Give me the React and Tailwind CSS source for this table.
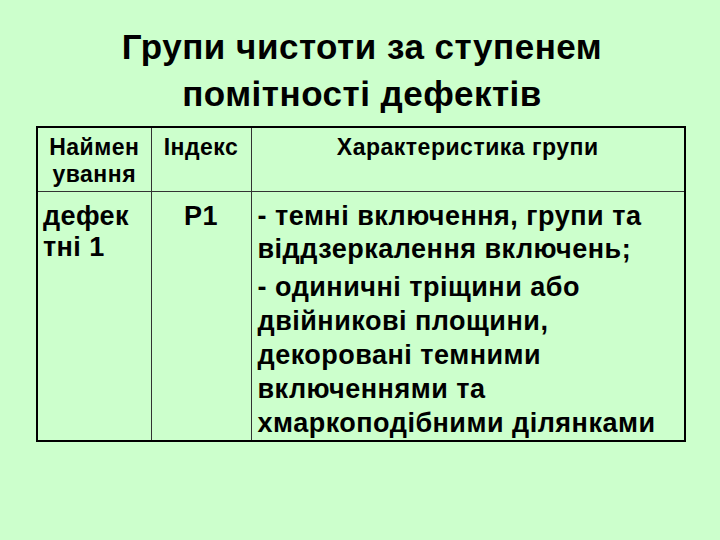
export default function App() {
  return (
    <div
      className="w-[720px] h-[540px] bg-[#ccffcc] text-black font-bold"
      style={{ fontFamily: '"Liberation Sans", Arial, sans-serif' }}
    >
      <h1 className="pt-[23px] text-center text-[35px] leading-[47px] tracking-[0.5px] pl-[4px]">
        Групи чистоти за ступенем
        <br />
        помітності дефектів
      </h1>
      <div className="pl-[36px] pt-[9px]">
        <table className="w-[650px] border-collapse border-2 border-black">
          <tbody>
            <tr className="h-[64px] align-top">
              <td className="w-[114px] border border-[#333] text-center text-[23px] leading-[27px] tracking-[0.5px] pt-[6px]">
                Наймен
                <br />
                ування
              </td>
              <td className="w-[100px] border border-[#333] text-center text-[23px] leading-[27px] tracking-[0.5px] pt-[6px]">
                Індекс
              </td>
              <td className="border border-[#333] text-center text-[23px] leading-[27px] tracking-[0.5px] pt-[6px]">
                Характеристика групи
              </td>
            </tr>
            <tr className="align-top">
              <td className="border border-[#333] text-[27px] leading-[31px] tracking-[0.4px] pl-[5px] pt-[9px]">
                дефек
                <br />
                тні 1
              </td>
              <td className="border border-[#333] text-center text-[27px] leading-[31px] tracking-[0.4px] pt-[9px]">
                Р1
              </td>
              <td className="border border-[#333] text-[27px] tracking-[0.5px] pl-[6px] pt-[8px]">
                <p className="leading-[33px]">
                  - темні включення, групи та
                  <br />
                  віддзеркалення включень;
                </p>
                <p className="mt-[4px] leading-[34px]">
                  - одиничні тріщини або
                  <br />
                  двійникові площини,
                  <br />
                  декоровані темними
                  <br />
                  включеннями та
                  <br />
                  хмаркоподібними ділянками
                </p>
              </td>
            </tr>
          </tbody>
        </table>
      </div>
    </div>
  );
}
